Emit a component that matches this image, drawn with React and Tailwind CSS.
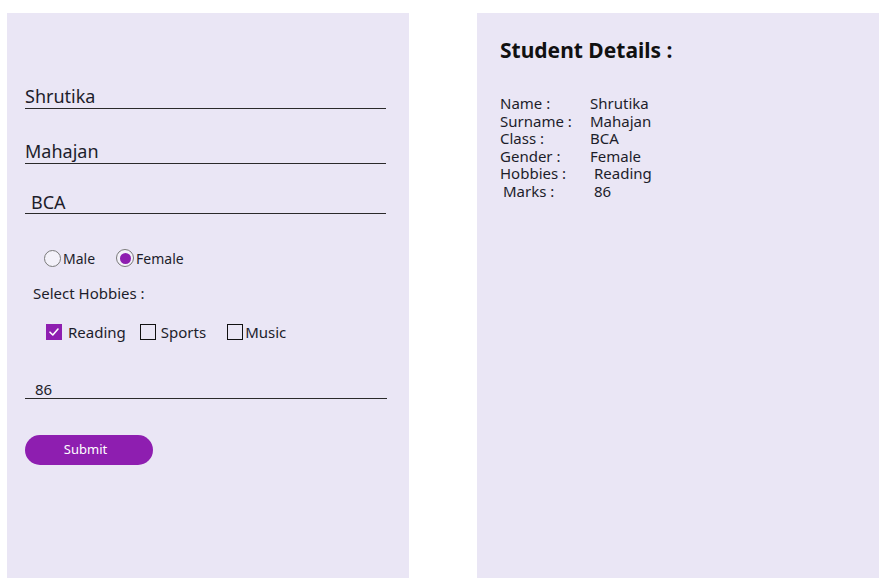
import React from "react";

const font = { fontFamily: '"Noto Sans", "Open Sans", sans-serif' };

function Field({ children, className = "", textClass = "" }) {
  return (
    <div className={`border-b-[1.5px] border-[#2a2a2a] ${className}`}>
      <div className={textClass}>{children}</div>
    </div>
  );
}

export default function App() {
  const rows = [
    ["Name :", "Shrutika", "", ""],
    ["Surname :", "Mahajan", "", ""],
    ["Class :", "BCA", "", ""],
    ["Gender :", "Female", "", ""],
    ["Hobbies :", "Reading", "", "pl-[4px]"],
    ["Marks :", "86", "pl-[3px]", "pl-[4px]"],
  ];
  return (
    <div className="min-h-[588px] w-[887px] bg-white text-[#1d1d2b]" style={font}>
      <div className="flex gap-[68px] pl-[7px] pt-[13px]">
        {/* Left form panel */}
        <div className="flex h-[565px] w-[402px] flex-col bg-[#eae6f5] pl-[18px]">
          <Field className="mt-[72px] h-[23.5px] w-[361px]" textClass="text-[18px] leading-[22px]">
            Shrutika
          </Field>
          <Field className="mt-[31.5px] h-[23.5px] w-[361px]" textClass="text-[18px] leading-[22px]">
            Mahajan
          </Field>
          <Field className="mt-[27px] h-[23.5px] w-[361px]" textClass="pl-[6px] text-[18px] leading-[22px]">
            BCA
          </Field>

          {/* Gender radios */}
          <div className="ml-[19px] mt-[34px] flex h-[20px] items-center text-[14px]">
            <span className="h-[17px] w-[17px] rounded-full border border-[#7a7a7a] bg-[#f3f1f9]" />
            <span className="ml-[2px]">Male</span>
            <span className="ml-[21px] flex h-[18px] w-[18px] items-center justify-center rounded-full border border-[#7a7a7a] bg-[#f3f1f9]">
              <span className="h-[11px] w-[11px] rounded-full bg-[#8e1eb0]" />
            </span>
            <span className="ml-[2px]">Female</span>
          </div>

          <div className="ml-[8px] mt-[14.5px] text-[15px] leading-[20px]">Select Hobbies :</div>

          {/* Hobbies */}
          <div className="ml-[21px] mt-[19.5px] flex h-[20px] items-center text-[15px]">
            <span className="flex h-[16px] w-[16px] items-center justify-center bg-[#8e1eb0]">
              <svg width="12" height="12" viewBox="0 0 12 12" fill="none">
                <path d="M2 6.2 L4.8 9 L10 3" stroke="white" strokeWidth="1.6" strokeLinecap="round" strokeLinejoin="round" />
              </svg>
            </span>
            <span className="ml-[6px]">Reading</span>
            <span className="ml-[14px] h-[16px] w-[16px] border-[1.5px] border-[#111]" />
            <span className="ml-[5px]">Sports</span>
            <span className="ml-[21px] h-[16px] w-[16px] border-[1.5px] border-[#111]" />
            <span className="ml-[2px]">Music</span>
          </div>

          <Field className="mt-[37.5px] h-[19.5px] w-[362px]" textClass="pl-[10px] text-[15px] leading-[18px]">
            86
          </Field>

          <button className="mt-[36px] flex h-[30px] w-[128px] items-center justify-center rounded-full bg-[#8e1eb0] pr-[7px] text-[13px] text-white">
            Submit
          </button>
        </div>

        {/* Right details panel */}
        <div className="flex h-[565px] w-[402px] flex-col bg-[#eae6f5] pl-[23px]">
          <h2 className="mt-[23px] text-[21px] font-bold leading-[28px] text-[#111]">Student Details :</h2>
          <div className="mt-[31px] grid grid-cols-[90px_1fr] text-[15px] leading-[17.6px]">
            {rows.map(([label, value, lp, vp]) => (
              <React.Fragment key={label}>
                <div className={lp}>{label}</div>
                <div className={vp}>{value}</div>
              </React.Fragment>
            ))}
          </div>
        </div>
      </div>
    </div>
  );
}
